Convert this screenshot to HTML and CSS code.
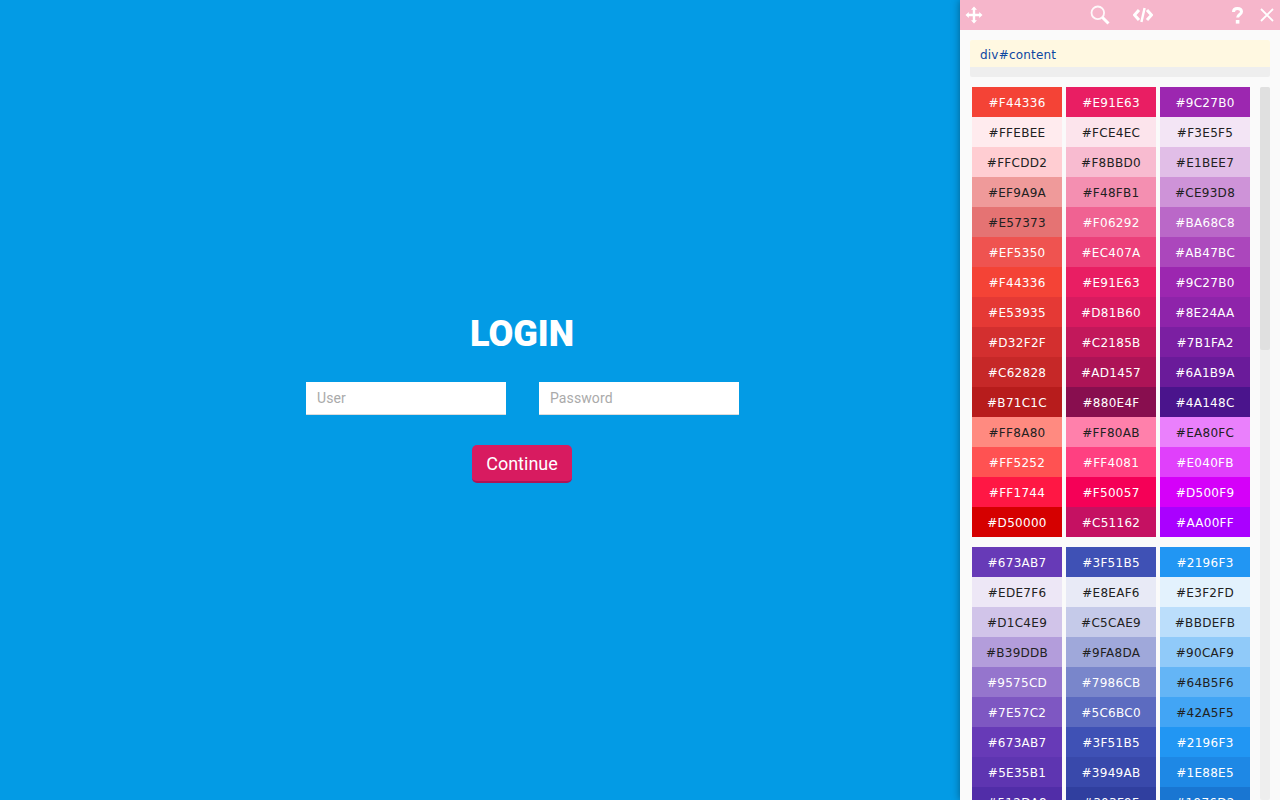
FILE: index.html
```html
<!DOCTYPE html>
<html lang="en">
<head>
<meta charset="utf-8">
<title>Login</title>
<link rel="stylesheet" href="styles.css">
</head>
<body>
<div class="app">
  <main class="main">
    <form class="login">
      <h1 class="login-title">LOGIN</h1>
      <div class="fields">
        <input class="field" type="text" placeholder="User">
        <input class="field" type="password" placeholder="Password">
      </div>
      <button class="continue" type="button">Continue</button>
    </form>
  </main>
  <aside class="panel">
    <header class="bar">
      <svg class="icon icon-move" viewBox="0 0 18 18"><path d="M9 0.5 12 3.8 10.2 3.8 10.2 7.8 14.2 7.8 14.2 6 17.5 9 14.2 12 14.2 10.2 10.2 10.2 10.2 14.2 12 14.2 9 17.5 6 14.2 7.8 14.2 7.8 10.2 3.8 10.2 3.8 12 0.5 9 3.8 6 3.8 7.8 7.8 7.8 7.8 3.8 6 3.8Z"/></svg>
      <svg class="icon icon-search" viewBox="0 0 20 20"><circle cx="7.8" cy="7.8" r="6.3" fill="none" stroke="#fff" stroke-width="1.8" stroke-opacity=".9"/><path d="M12.5 12.5 18.5 18.5" fill="none" stroke="#fff" stroke-width="3"/></svg>
      <svg class="icon icon-code" viewBox="0 0 20 16"><path d="M6 3 1.5 8 6 13M14 3 18.5 8 14 13" fill="none" stroke="#fff" stroke-width="3"/><path d="M11.6 1 8.4 15" fill="none" stroke="#fff" stroke-width="2.4"/></svg>
      <svg class="icon icon-help" viewBox="0 0 11 17"><path d="M1.5 5C1.5 2.6 3.2 1.6 5.4 1.6 7.8 1.6 9.5 2.8 9.5 4.8 9.5 7.4 5.6 7.6 5.6 10.6" fill="none" stroke="#fff" stroke-width="3"/><rect x="3.8" y="13" width="3.6" height="3.6"/></svg>
      <svg class="icon icon-close" viewBox="0 0 14 14"><path d="M1 1 13 13M13 1 1 13" fill="none" stroke="#fff" stroke-width="1.8"/></svg>
    </header>
    <div class="body">
      <div class="crumb">
        <div class="crumb-path">div#content</div>
        <div class="crumb-foot"></div>
      </div>
      <div class="lists">
        <div class="palettes">
          <div class="palette">
            <div class="swatch" style="background:#F44336">#F44336</div>
            <div class="swatch" style="background:#E91E63">#E91E63</div>
            <div class="swatch" style="background:#9C27B0">#9C27B0</div>
            <div class="swatch dark" style="background:#FFEBEE">#FFEBEE</div>
            <div class="swatch dark" style="background:#FCE4EC">#FCE4EC</div>
            <div class="swatch dark" style="background:#F3E5F5">#F3E5F5</div>
            <div class="swatch dark" style="background:#FFCDD2">#FFCDD2</div>
            <div class="swatch dark" style="background:#F8BBD0">#F8BBD0</div>
            <div class="swatch dark" style="background:#E1BEE7">#E1BEE7</div>
            <div class="swatch dark" style="background:#EF9A9A">#EF9A9A</div>
            <div class="swatch dark" style="background:#F48FB1">#F48FB1</div>
            <div class="swatch dark" style="background:#CE93D8">#CE93D8</div>
            <div class="swatch dark" style="background:#E57373">#E57373</div>
            <div class="swatch" style="background:#F06292">#F06292</div>
            <div class="swatch" style="background:#BA68C8">#BA68C8</div>
            <div class="swatch" style="background:#EF5350">#EF5350</div>
            <div class="swatch" style="background:#EC407A">#EC407A</div>
            <div class="swatch" style="background:#AB47BC">#AB47BC</div>
            <div class="swatch" style="background:#F44336">#F44336</div>
            <div class="swatch" style="background:#E91E63">#E91E63</div>
            <div class="swatch" style="background:#9C27B0">#9C27B0</div>
            <div class="swatch" style="background:#E53935">#E53935</div>
            <div class="swatch" style="background:#D81B60">#D81B60</div>
            <div class="swatch" style="background:#8E24AA">#8E24AA</div>
            <div class="swatch" style="background:#D32F2F">#D32F2F</div>
            <div class="swatch" style="background:#C2185B">#C2185B</div>
            <div class="swatch" style="background:#7B1FA2">#7B1FA2</div>
            <div class="swatch" style="background:#C62828">#C62828</div>
            <div class="swatch" style="background:#AD1457">#AD1457</div>
            <div class="swatch" style="background:#6A1B9A">#6A1B9A</div>
            <div class="swatch" style="background:#B71C1C">#B71C1C</div>
            <div class="swatch" style="background:#880E4F">#880E4F</div>
            <div class="swatch" style="background:#4A148C">#4A148C</div>
            <div class="swatch dark" style="background:#FF8A80">#FF8A80</div>
            <div class="swatch dark" style="background:#FF80AB">#FF80AB</div>
            <div class="swatch dark" style="background:#EA80FC">#EA80FC</div>
            <div class="swatch" style="background:#FF5252">#FF5252</div>
            <div class="swatch" style="background:#FF4081">#FF4081</div>
            <div class="swatch" style="background:#E040FB">#E040FB</div>
            <div class="swatch" style="background:#FF1744">#FF1744</div>
            <div class="swatch" style="background:#F50057">#F50057</div>
            <div class="swatch" style="background:#D500F9">#D500F9</div>
            <div class="swatch" style="background:#D50000">#D50000</div>
            <div class="swatch" style="background:#C51162">#C51162</div>
            <div class="swatch" style="background:#AA00FF">#AA00FF</div>
          </div>
          <div class="palette">
            <div class="swatch" style="background:#673AB7">#673AB7</div>
            <div class="swatch" style="background:#3F51B5">#3F51B5</div>
            <div class="swatch" style="background:#2196F3">#2196F3</div>
            <div class="swatch dark" style="background:#EDE7F6">#EDE7F6</div>
            <div class="swatch dark" style="background:#E8EAF6">#E8EAF6</div>
            <div class="swatch dark" style="background:#E3F2FD">#E3F2FD</div>
            <div class="swatch dark" style="background:#D1C4E9">#D1C4E9</div>
            <div class="swatch dark" style="background:#C5CAE9">#C5CAE9</div>
            <div class="swatch dark" style="background:#BBDEFB">#BBDEFB</div>
            <div class="swatch dark" style="background:#B39DDB">#B39DDB</div>
            <div class="swatch dark" style="background:#9FA8DA">#9FA8DA</div>
            <div class="swatch dark" style="background:#90CAF9">#90CAF9</div>
            <div class="swatch" style="background:#9575CD">#9575CD</div>
            <div class="swatch" style="background:#7986CB">#7986CB</div>
            <div class="swatch dark" style="background:#64B5F6">#64B5F6</div>
            <div class="swatch" style="background:#7E57C2">#7E57C2</div>
            <div class="swatch" style="background:#5C6BC0">#5C6BC0</div>
            <div class="swatch dark" style="background:#42A5F5">#42A5F5</div>
            <div class="swatch" style="background:#673AB7">#673AB7</div>
            <div class="swatch" style="background:#3F51B5">#3F51B5</div>
            <div class="swatch" style="background:#2196F3">#2196F3</div>
            <div class="swatch" style="background:#5E35B1">#5E35B1</div>
            <div class="swatch" style="background:#3949AB">#3949AB</div>
            <div class="swatch" style="background:#1E88E5">#1E88E5</div>
            <div class="swatch" style="background:#512DA8">#512DA8</div>
            <div class="swatch" style="background:#303F9F">#303F9F</div>
            <div class="swatch" style="background:#1976D2">#1976D2</div>
          </div>
        </div>
        <div class="scrollbar"><div class="thumb"></div></div>
      </div>
    </div>
  </aside>
</div>
</body>
</html>
```
FILE: styles.css
```css
* { box-sizing: border-box; }
html, body { margin: 0; height: 100%; overflow: hidden; }
body { font-family: Roboto, sans-serif; background: #039BE5; }
.app { display: flex; width: 1280px; height: 800px; overflow: hidden; }
.main { width: 960px; flex: none; padding: 311px 0 0 306px; }
.login { width: 433px; display: flex; flex-direction: column; align-items: center; }
.login-title { margin: 0 1px 0 0; height: 71px; font: 900 36px/46px Roboto, sans-serif; color: #fff; }
.fields { width: 100%; display: flex; justify-content: space-between; margin-bottom: 30px; }
.field { width: 200px; height: 33px; padding: 0 11px; border: 0; border-bottom: 1px solid #ddd; border-radius: 0; background: #fff; font: 14px Roboto, sans-serif; letter-spacing: .1px; color: #333; outline: 0; }
.field::placeholder { color: #aaa; opacity: 1; }
.continue { width: 100px; height: 38px; margin-right: 1px; padding: 0; border: 0; border-bottom: 2px solid #AD1457; border-radius: 5px; background: #D81B60; color: #fff; font: 18px Roboto, sans-serif; }
.panel { width: 320px; flex: none; background: #FAFAFA; box-shadow: 0 0 8px rgba(0, 0, 0, .4); position: relative; display: flex; flex-direction: column; font-family: "DejaVu Sans", sans-serif; }
.bar { height: 30px; flex: none; background: #F6B6CB; position: relative; }
.icon { position: absolute; fill: #fff; display: block; }
.icon-move { left: 5px; top: 6px; width: 18px; height: 18px; }
.icon-search { left: 130px; top: 5px; width: 20px; height: 20px; }
.icon-code { left: 173px; top: 7px; width: 20px; height: 16px; }
.icon-help { left: 272px; top: 7px; width: 11px; height: 17px; }
.icon-close { left: 300px; top: 8px; width: 14px; height: 14px; }
.body { flex: 1; min-height: 0; padding: 10px 10px 0; display: flex; flex-direction: column; gap: 10px; }
.crumb { flex: none; }
.crumb-path { height: 27px; padding-left: 10px; background: #FFF8E1; color: #0D47A1; font-size: 12px; letter-spacing: .2px; line-height: 31px; border-radius: 2px 2px 0 0; }
.crumb-foot { height: 10px; background: #EEE; border-radius: 0 0 2px 2px; }
.lists { flex: 1; min-height: 0; display: flex; padding-left: 2px; }
.palettes { width: 278px; flex: none; display: flex; flex-direction: column; gap: 10px; }
.palette { display: grid; grid-template-columns: repeat(3, 90px); column-gap: 4px; }
.swatch { height: 30px; color: #fff; font-size: 12px; letter-spacing: .28px; line-height: 32px; text-align: center; }
.swatch.dark { color: #212121; }
.scrollbar { width: 10px; margin-left: 10px; flex: none; background: #EEE; border-radius: 2px; }
.thumb { height: 263px; background: #E0E0E0; border-radius: 2px; }
```
